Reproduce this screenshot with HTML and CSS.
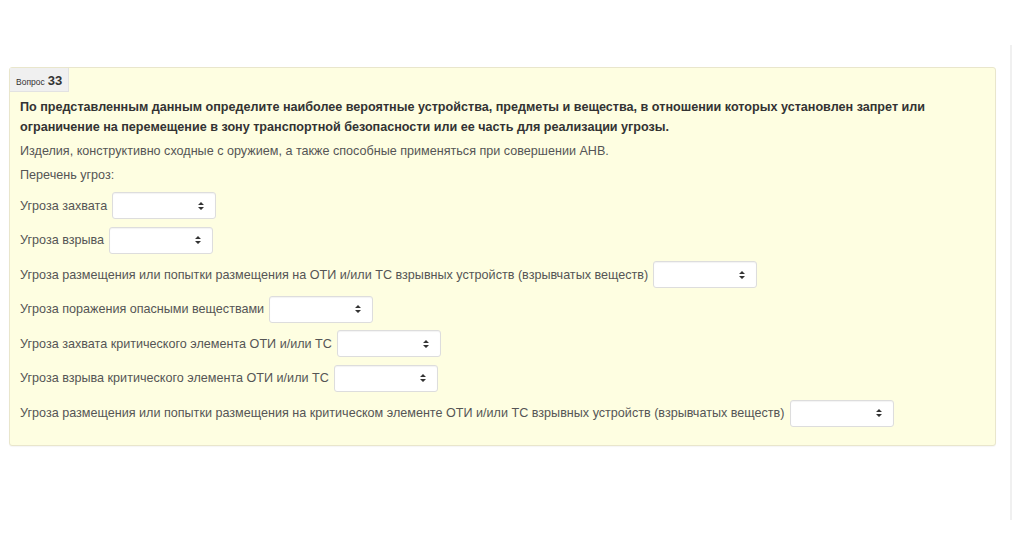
FILE: index.html
```html
<!DOCTYPE html>
<html lang="ru">
<head>
<meta charset="utf-8">
<link rel="stylesheet" href="styles.css">
</head>
<body>
<div class="page">
  <div class="main">
    <div class="card">
      <div class="tab"><span class="tab-label">Вопрос</span> <span class="tab-num">33</span></div>
      <div class="content">
        <p class="question">По представленным данным определите наиболее вероятные устройства, предметы и вещества, в отношении которых установлен запрет или ограничение на перемещение в зону транспортной безопасности или ее часть для реализации угрозы.</p>
        <p class="text">Изделия, конструктивно сходные с оружием, а также способные применяться при совершении АНВ.</p>
        <p class="text">Перечень угроз:</p>
        <div class="row"><span>Угроза захвата</span><div class="sel"><svg width="6" height="8" viewBox="0 0 6 8"><path d="M3 0L6 3H0Z M3 8L0 5H6Z" fill="#333"/></svg></div></div>
        <div class="row"><span>Угроза взрыва</span><div class="sel"><svg width="6" height="8" viewBox="0 0 6 8"><path d="M3 0L6 3H0Z M3 8L0 5H6Z" fill="#333"/></svg></div></div>
        <div class="row"><span>Угроза размещения или попытки размещения на ОТИ и/или ТС взрывных устройств (взрывчатых веществ)</span><div class="sel"><svg width="6" height="8" viewBox="0 0 6 8"><path d="M3 0L6 3H0Z M3 8L0 5H6Z" fill="#333"/></svg></div></div>
        <div class="row"><span>Угроза поражения опасными веществами</span><div class="sel"><svg width="6" height="8" viewBox="0 0 6 8"><path d="M3 0L6 3H0Z M3 8L0 5H6Z" fill="#333"/></svg></div></div>
        <div class="row"><span>Угроза захвата критического элемента ОТИ и/или ТС</span><div class="sel"><svg width="6" height="8" viewBox="0 0 6 8"><path d="M3 0L6 3H0Z M3 8L0 5H6Z" fill="#333"/></svg></div></div>
        <div class="row"><span>Угроза взрыва критического элемента ОТИ и/или ТС</span><div class="sel"><svg width="6" height="8" viewBox="0 0 6 8"><path d="M3 0L6 3H0Z M3 8L0 5H6Z" fill="#333"/></svg></div></div>
        <div class="row"><span>Угроза размещения или попытки размещения на критическом элементе ОТИ и/или ТС взрывных устройств (взрывчатых веществ)</span><div class="sel"><svg width="6" height="8" viewBox="0 0 6 8"><path d="M3 0L6 3H0Z M3 8L0 5H6Z" fill="#333"/></svg></div></div>
      </div>
    </div>
  </div>
  <div class="edge"></div>
</div>
</body>
</html>
```

FILE: styles.css
```css
* { box-sizing: border-box; }
html, body { margin: 0; padding: 0; background: #fff; }
body {
  font-family: "Liberation Sans", Arial, sans-serif;
  color: #555;
  width: 1024px;
  height: 556px;
  overflow: hidden;
}
.page {
  display: flex;
  align-items: flex-start;
}
.main {
  width: 1010px;
  padding: 67px 0 0 9px;
}
.card {
  width: 987px;
  background: #fefee1;
  border: 1px solid #e9e6cc;
  border-radius: 3px;
  box-shadow: 0 1px 1px rgba(0,0,0,0.04);
}
.tab {
  display: inline-flex;
  align-items: baseline;
  gap: 3px;
  height: 24px;
  padding: 5px 6px 0 6px;
  background: #f0f0f0;
  border-right: 1px solid #e2e2e2;
  border-bottom: 1px solid #e2e2e2;
  color: #333;
}
.tab-label { font-size: 8.5px; }
.tab-num { font-size: 13px; font-weight: bold; }
.content {
  padding: 5px 10px 18px 10px;
}
.question {
  margin: 0;
  font-size: 12.6px;
  line-height: 20px;
  font-weight: bold;
  color: #333;
}
.text {
  margin: 4px 0 0 0;
  font-size: 12.6px;
  line-height: 20px;
  color: #555;
}
.row {
  display: flex;
  align-items: center;
  gap: 5px;
  height: 27px;
  margin-top: 7.6px;
  font-size: 12.6px;
  color: #555;
}
.text + .row { margin-top: 7px; }
.sel {
  width: 104px;
  height: 27px;
  background: #fff;
  border: 1px solid #ddd;
  border-radius: 3px;
  box-shadow: inset 0 1px 1px rgba(0,0,0,0.05);
  display: flex;
  align-items: center;
  justify-content: flex-end;
  padding-right: 11px;
}
.edge {
  width: 2px;
  height: 475px;
  margin-top: 45px;
  background: #f0f0f0;
}
```
